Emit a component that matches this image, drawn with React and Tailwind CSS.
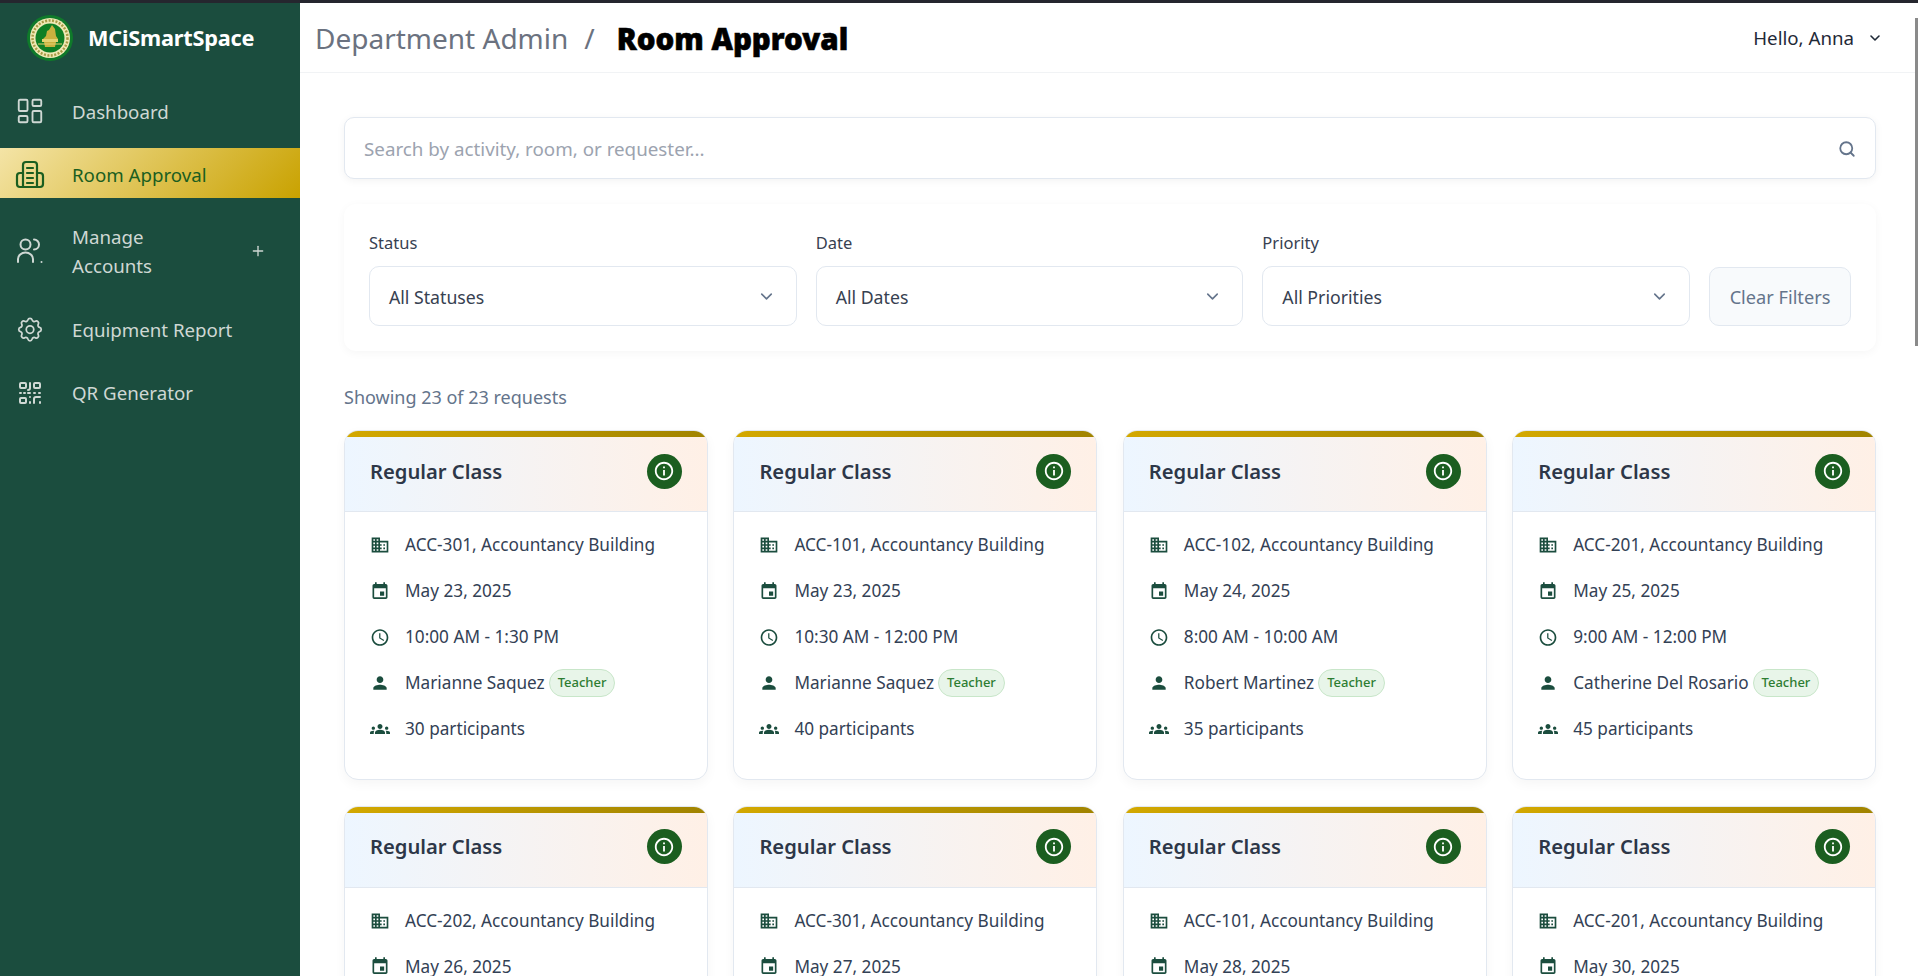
import React from "react";
import { ChevronDown, LayoutDashboard, Plus, Search } from "lucide-react";
import { MdAccessTime, MdBusiness, MdEvent, MdGroups, MdInfoOutline, MdPerson } from "react-icons/md";
import { TbSettings } from "react-icons/tb";

const cards = [
  { room: "ACC-301, Accountancy Building", date: "May 23, 2025", time: "10:00 AM - 1:30 PM", name: "Marianne Saquez", count: 30 },
  { room: "ACC-101, Accountancy Building", date: "May 23, 2025", time: "10:30 AM - 12:00 PM", name: "Marianne Saquez", count: 40 },
  { room: "ACC-102, Accountancy Building", date: "May 24, 2025", time: "8:00 AM - 10:00 AM", name: "Robert Martinez", count: 35 },
  { room: "ACC-201, Accountancy Building", date: "May 25, 2025", time: "9:00 AM - 12:00 PM", name: "Catherine Del Rosario", count: 45 },
  { room: "ACC-202, Accountancy Building", date: "May 26, 2025", time: "8:00 AM - 10:00 AM", name: "Marianne Saquez", count: 30 },
  { room: "ACC-301, Accountancy Building", date: "May 27, 2025", time: "10:00 AM - 12:00 PM", name: "Robert Martinez", count: 35 },
  { room: "ACC-101, Accountancy Building", date: "May 28, 2025", time: "9:00 AM - 11:00 AM", name: "Marianne Saquez", count: 40 },
  { room: "ACC-201, Accountancy Building", date: "May 30, 2025", time: "1:00 PM - 3:00 PM", name: "Catherine Del Rosario", count: 45 },
];

const Logo = () => (
  <svg width="46" height="46" viewBox="0 0 46 46" className="shrink-0">
    <circle cx="23" cy="23" r="23" fill="#0f7a2a" />
    <circle cx="23" cy="23" r="20" fill="#efe9b4" />
    <circle cx="23" cy="23" r="17.500" fill="none" stroke="#a89a45" strokeWidth="2.500" strokeDasharray="2 1.500" />
    <circle cx="23" cy="23" r="14.500" fill="#0f7f25" />
    <path d="M25 10l3 4 1 7 2 3H16l3-3 1-5 2-1z" fill="#c9b13f" />
    <rect x="15" y="24" width="16" height="3" fill="#e3d270" />
    <path d="M17 27h12l-1 5H18z" fill="#c9b13f" />
    <path d="M11 29h24" stroke="#e3d270" strokeWidth="1" />
  </svg>
);

const RoomIcon = () => (
  <svg width="30" height="30" viewBox="0 0 30 30" fill="none" stroke="currentColor" strokeWidth="2.200" strokeLinecap="round" strokeLinejoin="round">
    <path d="M8 27V5a3 3 0 0 1 3-3h8a3 3 0 0 1 3 3v22" />
    <path d="M8 13H5a3 3 0 0 0-3 3v8a3 3 0 0 0 3 3h20a3 3 0 0 0 3-3v-8a3 3 0 0 0-3-3h-3" />
    <path d="M12 8h6M12 13h6M12 18h6M12 23h6" />
  </svg>
);

const UsersIcon = () => (
  <svg width="26" height="26" viewBox="0 0 26 26" fill="none" stroke="currentColor" strokeWidth="2" strokeLinecap="round">
    <circle cx="8.500" cy="6.500" r="5" />
    <path d="M17 1.500a5 5 0 0 1 0 10" />
    <path d="M1 24v-3a7.500 6.500 0 0 1 15 0v3" />
    <path d="M24.500 24h.01" />
  </svg>
);

const QrIcon = () => (
  <svg width="22" height="22" viewBox="0 0 22 22" fill="none" stroke="currentColor" strokeWidth="2" strokeLinecap="round" strokeLinejoin="round">
    <rect x="1" y="1" width="6" height="5" rx="1" />
    <rect x="15" y="1" width="6" height="5" rx="1" />
    <rect x="1" y="16" width="6" height="5" rx="1" />
    <path d="M11 1v5a2 2 0 0 1-2 2M1 11h1M5 11h1M9 11h2M15 11h1M20 11h1M11 15v.01M11 20v1M15 21v-4a2 2 0 0 1 2-2h4M21 20v1" />
  </svg>
);

const NavItem = ({ icon, active, children, trailing }) => (
  <div className={active
    ? "flex items-center h-[50px] pt-[3px] pl-[15px] pr-5 text-[18.700px] text-[#1b5e20] bg-[linear-gradient(135deg,#f4e4a6,#c9a200)]"
    : "flex items-center pl-[15px] pr-5 text-[18.700px] text-[#cfd8d4]"}>
    <span className="w-[30px] flex justify-center shrink-0">{icon}</span>
    <span className="ml-[27px] flex-1 leading-[29px]">{children}</span>
    {trailing}
  </div>
);

const Sidebar = () => (
  <aside className="w-[300px] shrink-0 bg-[#1b4d3e] h-full">
    <div className="flex items-center pl-[27px] pt-[1px] h-[69px] gap-[15px]">
      <Logo />
      <span className="text-[21.700px] font-bold text-white tracking-[-0.2px]">MCiSmartSpace</span>
    </div>
    <div className="flex flex-col pt-[23px]">
      <NavItem icon={<LayoutDashboard size={32} strokeWidth={1.500} />}>Dashboard</NavItem>
      <div className="mt-[21px]">
        <NavItem active icon={<RoomIcon />}>Room Approval</NavItem>
      </div>
      <div className="mt-[24px]">
        <NavItem icon={<UsersIcon />} trailing={<Plus size={16} className="mr-[14px]" />}>
          Manage<br />Accounts
        </NavItem>
      </div>
      <div className="mt-[33px]">
        <NavItem icon={<TbSettings size={33} strokeWidth={1.400} />}>Equipment Report</NavItem>
      </div>
      <div className="mt-[32px]">
        <NavItem icon={<QrIcon />}>QR Generator</NavItem>
      </div>
    </div>
  </aside>
);

const Header = () => (
  <header className="h-[70px] shrink-0 border-b border-[#f1f3f5] flex items-center pl-[15px] pr-[35px] pt-[1px]">
    <span className="text-[28px] text-[#6b7280]">Department Admin</span>
    <span className="text-[28px] text-[#6b7280] ml-[16px]">/</span>
    <span className="text-[29.500px] font-black text-black ml-[22px] mt-[2px] [-webkit-text-stroke:0.6px_black]">Room Approval</span>
    <div className="ml-auto flex items-center text-[18.700px] text-[#1f2937]">
      <span>Hello, Anna</span>
      <ChevronDown size={16} strokeWidth={2.400} className="ml-[13px]" />
    </div>
  </header>
);

const FilterSelect = ({ label, value }) => (
  <div className="flex-1 min-w-0">
    <div className="text-[16.500px] text-[#374151] leading-[24px] mb-[11px]">{label}</div>
    <div className="h-[60px] border border-[#e2e8f0] rounded-[10px] bg-white flex items-center pl-[19px] pr-[20px] pt-[3px] text-[17.700px] text-[#374151]">
      <span className="flex-1">{value}</span>
      <ChevronDown size={19} className="text-[#64748b] -mt-[3px]" />
    </div>
  </div>
);

const InfoRow = ({ icon, children }) => (
  <div className="flex items-center h-[46px] text-[#334155] text-[17.200px]">
    <span className="w-[20px] flex justify-center text-[#1b4d3e] shrink-0">{icon}</span>
    <span className="ml-[15px] flex items-center">{children}</span>
  </div>
);

const Card = ({ room, date, time, name, count }) => (
  <div className="h-[350px] rounded-[14px] border border-[#e2e8f0] bg-white shadow-[0_4px_12px_rgba(0,0,0,0.04)] overflow-hidden flex flex-col shrink-0">
    <div className="h-[7px] -mx-px -mt-px shrink-0 bg-[linear-gradient(135deg,#d4a900,#a08300)]" />
    <div className="h-[75px] shrink-0 flex items-center justify-between px-[25px] pb-[6px] border-b border-[#e2e8f0] bg-[linear-gradient(90deg,#edf6ff,#fff0e6)]">
      <span className="text-[20.200px] font-semibold text-[#2d3748]">Regular Class</span>
      <span className="w-[35px] h-[35px] rounded-full bg-[#1b5e20] flex items-center justify-center text-white">
        <MdInfoOutline size={22} />
      </span>
    </div>
    <div className="pl-[25px] pt-[10px]">
      <InfoRow icon={<MdBusiness size={20} />}>{room}</InfoRow>
      <InfoRow icon={<MdEvent size={21} />}>{date}</InfoRow>
      <InfoRow icon={<MdAccessTime size={21} />}>{time}</InfoRow>
      <InfoRow icon={<MdPerson size={22} />}>
        {name}
        <span className="ml-[4px] h-[28px] px-[8px] rounded-full border border-[#c8e6c9] bg-[#e8f5e9] text-[#2e7d32] text-[13px] font-medium flex items-center">Teacher</span>
      </InfoRow>
      <InfoRow icon={<MdGroups size={24} />}>{count} participants</InfoRow>
    </div>
  </div>
);

export default function App() {
  return (
    <div className="h-screen overflow-hidden flex flex-col bg-white font-['Noto_Sans','Open_Sans',sans-serif]">
      <div className="h-[3px] bg-[#25262e] shrink-0" />
      <div className="flex flex-1 min-h-0">
        <Sidebar />
        <main className="flex-1 min-w-0 flex flex-col">
          <Header />
          <div className="pl-[44px] pr-[42px] pt-[44px]">
            <div className="h-[62px] border border-[#e2e8f0] rounded-[10px] bg-white shadow-[0_2px_8px_rgba(0,0,0,0.05)] flex items-center pl-[19px] pr-[19px] pt-[2px] text-[18.800px] text-[#9ca3af]">
              <span className="flex-1">Search by activity, room, or requester...</span>
              <Search size={18} strokeWidth={2.400} className="text-[#64748b]" />
            </div>
            <div className="mt-[25px] h-[147px] rounded-[12px] bg-white shadow-[0_2px_10px_rgba(0,0,0,0.04)] flex items-end gap-[19px] pl-[25px] pr-[25px] pb-[25px]">
              <FilterSelect label="Status" value="All Statuses" />
              <FilterSelect label="Date" value="All Dates" />
              <FilterSelect label="Priority" value="All Priorities" />
              <div className="w-[142px] h-[59px] shrink-0 rounded-[10px] border border-[#e2e8f0] bg-[#f8fafc] text-[#64748b] text-[18.200px] pt-[2px] flex items-center justify-center">Clear Filters</div>
            </div>
            <div className="mt-[33px] text-[18px] text-[#64748b] leading-[26px]">Showing 23 of 23 requests</div>
            <div className="mt-[20px] grid grid-cols-4 gap-[25.600px]">
              {cards.map((c, i) => <Card key={i} {...c} />)}
            </div>
          </div>
        </main>
      </div>
      <div className="fixed right-0 top-[18px] w-[3px] h-[328px] bg-[#8a8a8a]" />
    </div>
  );
}
